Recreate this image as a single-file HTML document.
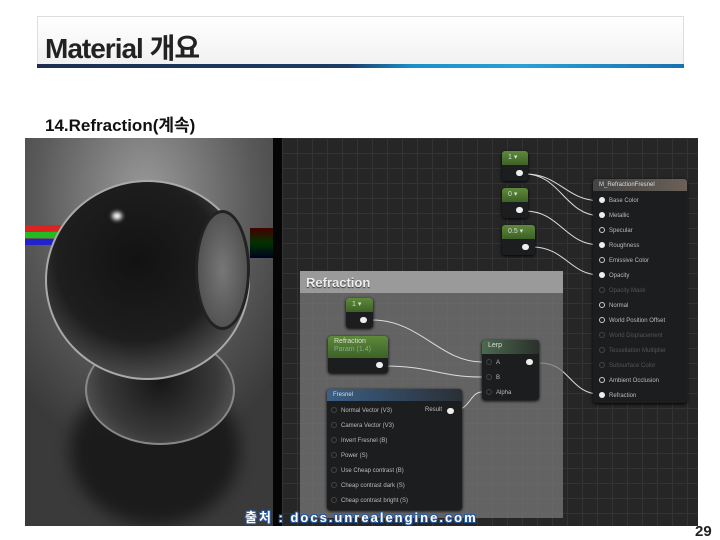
<!DOCTYPE html>
<html><head><meta charset="utf-8"><style>
*{margin:0;padding:0;box-sizing:border-box}
body{width:720px;height:540px;background:#fff;position:relative;overflow:hidden;font-family:"Liberation Sans","Noto Sans CJK KR",sans-serif}
.a{position:absolute}
.node{position:absolute;background:#1c1d1e;border-radius:3px;box-shadow:0 1px 3px #000}
.gh{background:linear-gradient(#5e8a3a,#3d6127);height:14px;border-radius:3px 3px 0 0;color:#ddd;font-size:7px;padding:2px 6px}
.pin{position:absolute;width:7px;height:6px;background:#eee;border-radius:3px}
.lbl{position:absolute;color:#bbb;font-size:6px;white-space:nowrap}
.lbl i{display:inline-block;width:6px;height:6px;border-radius:3px;background:#eee;margin-right:4px;vertical-align:-1px}
.lbl i.o{background:none;border:1px solid #ccc}
.lbl.d{color:#555}.lbl.d i{background:none;border:1px solid #444}
</style></head><body>
<div class="a" style="left:37px;top:16px;width:647px;height:49px;border:1px solid #ddd;border-bottom:none;background:linear-gradient(#fff,#f1f1f1)"></div>
<div class="a" style="left:37px;top:64px;width:647px;height:4px;background:linear-gradient(90deg,#1c2f52 0%,#1c3c66 48%,#1c8fc8 58%,#2aa0d6 75%,#1a70b0 100%)"></div>
<div class="a" style="left:45px;top:27px;font-size:28px;font-weight:bold;color:#222;letter-spacing:-1px">Material 개요</div>
<div class="a" style="left:45px;top:111px;font-size:17px;font-weight:bold;color:#111">14.Refraction(계속)</div>

<!-- render -->
<div class="a" style="left:25px;top:138px;width:250px;height:388px;overflow:hidden;background:radial-gradient(ellipse 180px 260px at 120px 60px,#9a9a9a,#5a5a5a 60%,#3a3a3a)">
<div class="a" style="left:0;top:87px;width:40px;height:6px;background:#d22"></div>
<div class="a" style="left:0;top:94px;width:40px;height:6px;background:#2b2"></div>
<div class="a" style="left:0;top:101px;width:40px;height:6px;background:#22c"></div>
<div class="a" style="left:225px;top:90px;width:25px;height:30px;background:linear-gradient(#400,#030 50%,#002)"></div>
<div class="a" style="left:45px;top:237px;width:170px;height:150px;border-radius:50%;background:#161616;opacity:.85;filter:blur(8px)"></div>
<div class="a" style="left:60px;top:197px;width:150px;height:110px;border-radius:50%;background:radial-gradient(circle at 50% 40%,#151515,#3a3a3a 60%,#6a6a6a);border:2px solid #888"></div>
<div class="a" style="left:20px;top:42px;width:205px;height:200px;border-radius:50%;background:radial-gradient(circle at 45% 40%,#121212 0,#1e1e1e 50%,#4a4a4a 72%,#888 100%);border:2px solid #aaa"></div>
<div class="a" style="left:170px;top:72px;width:55px;height:120px;border-radius:50%;background:radial-gradient(#777,#444);border:3px solid #222"></div>
<div class="a" style="left:87px;top:74px;width:10px;height:8px;border-radius:50%;background:#fff;filter:blur(2px)"></div>
</div>
<div class="a" style="left:273px;top:138px;width:9px;height:388px;background:#050505"></div>

<!-- graph -->
<div class="a" style="left:282px;top:138px;width:416px;height:388px;background-color:#262626;background-image:linear-gradient(#333 1px,transparent 1px),linear-gradient(90deg,#333 1px,transparent 1px);background-size:15px 15px"></div>
<svg class="a" style="left:0;top:0" width="720" height="540"><g stroke="#ddd" stroke-width="1" fill="none">
<path d="M525 174C560 174 565 200 600 201"/><path d="M525 174C560 174 565 215 600 216"/><path d="M525 211C560 211 565 245 600 245"/><path d="M532 247C565 247 570 275 600 275"/><path d="M540 363C570 363 570 394 600 394"/></g></svg>
<div class="node" style="left:502px;top:151px;width:26px;height:30px"><div class="gh">1 ▾</div><div class="pin" style="left:14px;top:19px"></div></div>
<div class="node" style="left:502px;top:188px;width:26px;height:30px"><div class="gh">0 ▾</div><div class="pin" style="left:14px;top:19px"></div></div>
<div class="node" style="left:502px;top:225px;width:33px;height:30px"><div class="gh">0.5 ▾</div><div class="pin" style="left:20px;top:19px"></div></div>
<div class="node" style="left:593px;top:179px;width:94px;height:224px"><div style="height:12px;background:linear-gradient(90deg,#444,#6a6058);color:#ddd;font-size:6px;padding:3px 6px;border-radius:3px 3px 0 0">M_RefractionFresnel</div>
<div class="lbl" style="left:6px;top:18px"><i></i>Base Color</div><div class="lbl" style="left:6px;top:33px"><i></i>Metallic</div><div class="lbl" style="left:6px;top:48px"><i class="o"></i>Specular</div><div class="lbl" style="left:6px;top:63px"><i></i>Roughness</div><div class="lbl" style="left:6px;top:78px"><i class="o"></i>Emissive Color</div><div class="lbl" style="left:6px;top:93px"><i></i>Opacity</div><div class="lbl d" style="left:6px;top:108px"><i></i>Opacity Mask</div><div class="lbl" style="left:6px;top:123px"><i class="o"></i>Normal</div><div class="lbl" style="left:6px;top:138px"><i class="o"></i>World Position Offset</div><div class="lbl d" style="left:6px;top:153px"><i></i>World Displacement</div><div class="lbl d" style="left:6px;top:168px"><i></i>Tessellation Multiplier</div><div class="lbl d" style="left:6px;top:183px"><i></i>Subsurface Color</div><div class="lbl" style="left:6px;top:198px"><i class="o"></i>Ambient Occlusion</div><div class="lbl" style="left:6px;top:213px"><i></i>Refraction</div></div>

<div class="a" style="left:300px;top:271px;width:263px;height:247px;background:rgba(120,120,120,.75)"></div>
<div class="a" style="left:300px;top:271px;width:263px;height:22px;background:#9a9a9a;color:#eee;font-weight:bold;font-size:13px;padding:4px 6px;text-shadow:0 1px 1px #333">Refraction</div>
<svg class="a" style="left:0;top:0" width="720" height="540"><g stroke="#ddd" fill="none"><path d="M372 320C420 320 440 362 482 362"/><path d="M385 366C430 366 440 377 482 377"/><path d="M455 410C470 410 470 392 482 392"/></g></svg>
<div class="node" style="left:346px;top:298px;width:27px;height:30px"><div class="gh">1 ▾</div><div class="pin" style="left:14px;top:19px"></div></div>
<div class="node" style="left:328px;top:336px;width:60px;height:37px"><div class="gh" style="height:22px;line-height:8px">Refraction<br><span style="color:#8a9">Param (1.4)</span></div><div class="pin" style="left:48px;top:26px"></div></div>
<div class="node" style="left:482px;top:340px;width:57px;height:60px"><div class="gh" style="background:linear-gradient(90deg,#4c6a50,#2a302a)">Lerp</div><div class="lbl d" style="left:4px;top:19px"><i></i><span style="color:#bbb">A</span></div><div class="lbl d" style="left:4px;top:34px"><i></i><span style="color:#bbb">B</span></div><div class="lbl d" style="left:4px;top:49px"><i></i><span style="color:#bbb">Alpha</span></div><div class="pin" style="left:44px;top:19px"></div></div>
<div class="node" style="left:327px;top:389px;width:135px;height:121px"><div style="height:12px;background:linear-gradient(90deg,#3a5f86,#2a2f36);color:#ddd;font-size:6px;padding:3px 6px;border-radius:3px 3px 0 0">Fresnel</div>
<div class="lbl d" style="left:4px;top:18px"><i></i><span style="color:#bbb">Normal Vector (V3)</span></div><div class="lbl" style="left:98px;top:18px">Result</div><div class="pin" style="left:120px;top:19px"></div>
<div class="lbl d" style="left:4px;top:33px"><i></i><span style="color:#bbb">Camera Vector (V3)</span></div><div class="lbl d" style="left:4px;top:48px"><i></i><span style="color:#bbb">Invert Fresnel (B)</span></div><div class="lbl d" style="left:4px;top:63px"><i></i><span style="color:#bbb">Power (S)</span></div><div class="lbl d" style="left:4px;top:78px"><i></i><span style="color:#bbb">Use Cheap contrast (B)</span></div><div class="lbl d" style="left:4px;top:93px"><i></i><span style="color:#bbb">Cheap contrast dark (S)</span></div><div class="lbl d" style="left:4px;top:108px"><i></i><span style="color:#bbb">Cheap contrast bright (S)</span></div></div>

<div class="a" style="left:245px;top:507px;font-size:13px;font-weight:bold;color:#fff;letter-spacing:2px;white-space:nowrap;text-shadow:-1px -1px 0 #2a5aa0,1px -1px 0 #2a5aa0,-1px 1px 0 #2a5aa0,1px 1px 0 #2a5aa0">출처 : docs.unrealengine.com</div>
<div class="a" style="left:695px;top:523px;font-size:15px;font-weight:bold;color:#222">29</div>
</body></html>
